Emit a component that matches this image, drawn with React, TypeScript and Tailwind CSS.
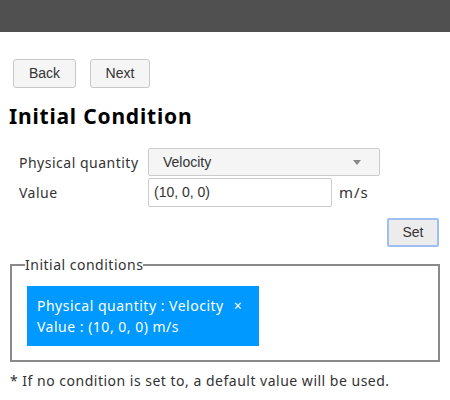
import React from "react";

const meiryo = { fontFamily: '"Noto Sans", "Open Sans", sans-serif' };

export default function App() {
  return (
    <div className="w-[450px] h-[400px] bg-white text-[#333] overflow-hidden tracking-[0.5px]" style={meiryo}>
      <div className="h-[32px] bg-[#505050]" />
      <div className="flex gap-[14px] pl-[13px] pt-[27px] tracking-normal">
        <button className="w-[63px] h-[29px] border border-[#c8c8c8] rounded-[3px] bg-[#f5f5f5] text-[14px] text-[#333] [font-family:'Liberation_Sans',Arial,sans-serif]">
          Back
        </button>
        <button className="w-[60px] h-[29px] border border-[#c8c8c8] rounded-[3px] bg-[#f5f5f5] text-[14px] text-[#333] [font-family:'Liberation_Sans',Arial,sans-serif]">
          Next
        </button>
      </div>
      <h1 className="pl-[9px] mt-[13px] text-[21px] font-bold leading-[30px] text-black tracking-[0.8px]">Initial Condition</h1>
      <div className="mt-[17px] pl-[19px] flex flex-col gap-[2px] text-[14px]">
        <div className="flex items-center h-[28px]">
          <span className="w-[129px]">Physical quantity</span>
          <div className="w-[232px] h-[28px] border border-[#ccc] rounded-[2px] bg-[#f5f5f5] flex items-center justify-between pl-[14px] pr-[18px] [font-family:'Liberation_Sans',Arial,sans-serif] text-[#333] tracking-normal">
            <span>Velocity</span>
            <svg width="8" height="5" viewBox="0 0 8 5"><path d="M0 0h8L4 5z" fill="#888" /></svg>
          </div>
        </div>
        <div className="flex items-center h-[29px]">
          <span className="w-[129px]">Value</span>
          <div className="w-[184px] h-[29px] border border-[#ccc] rounded-[2px] bg-white flex items-center pl-[5px] [font-family:'Liberation_Sans',Arial,sans-serif] text-[#333] tracking-normal">
            (10, 0, 0)
          </div>
          <span className="ml-[7px] text-[15px] tracking-[1px]">m/s</span>
        </div>
      </div>
      <div className="flex justify-end pr-[11px] mt-[11px] tracking-normal">
        <button className="w-[52px] h-[29px] border-2 border-[#9ec0f0] rounded-[2px] bg-[#ececec] text-[14px] text-[#333] [font-family:'Liberation_Sans',Arial,sans-serif]">
          Set
        </button>
      </div>
      <fieldset className="mx-[10px] mt-[9px] border-2 border-[#8a8a8a] border-solid pl-[13px] pr-[2px] pt-[12px] pb-[14px]">
        <legend className="px-0 text-[14px] leading-[18px]">Initial conditions</legend>
        <div className="ml-[2px] w-[232px] h-[60px] bg-[#0099ff] text-white text-[14px] pl-[10px] pt-[9px] leading-[21px]">
          <div>Physical quantity : Velocity <span className="ml-[6px]">×</span></div>
          <div>Value : (10, 0, 0) m/s</div>
        </div>
      </fieldset>
      <p className="pl-[10px] mt-[8px] text-[14px]">* If no condition is set to, a default value will be used.</p>
    </div>
  );
}
